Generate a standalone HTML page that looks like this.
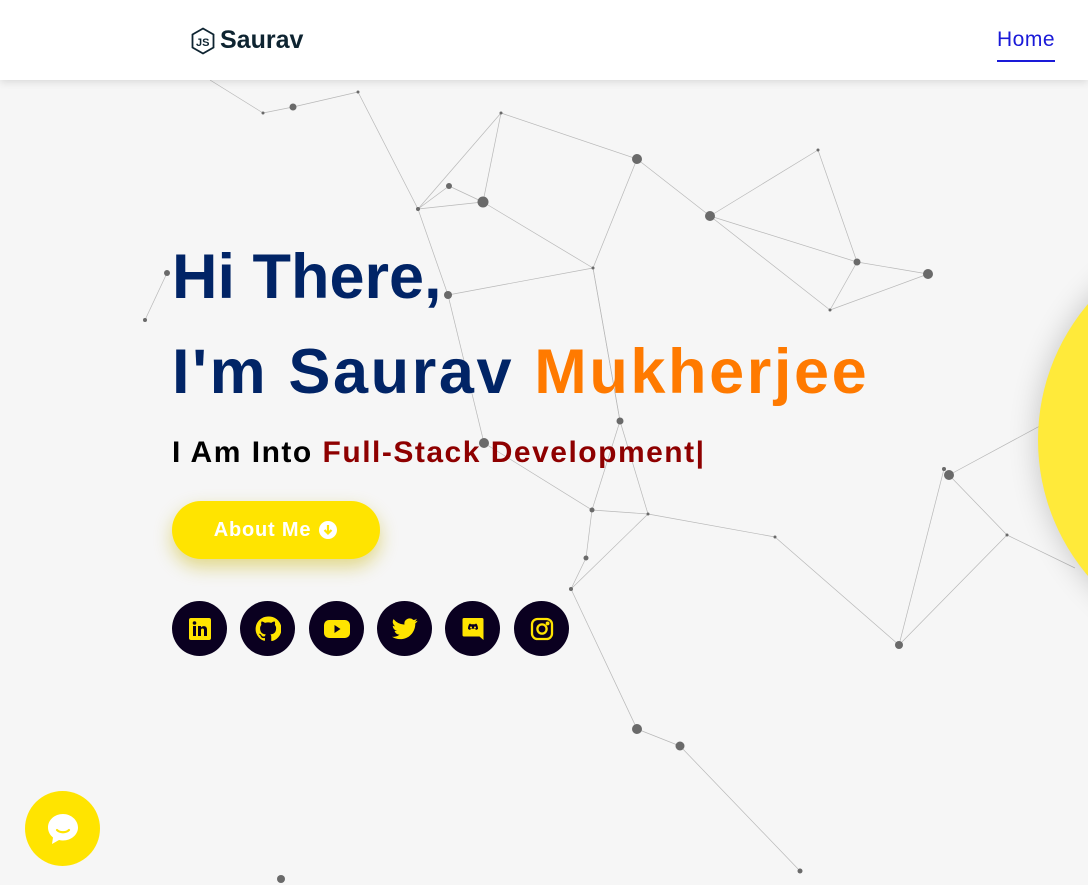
<!DOCTYPE html>
<html><head><meta charset="utf-8"><style>
*{margin:0;padding:0;box-sizing:border-box}
body{width:1088px;height:885px;overflow:hidden;background:#f6f6f6;font-family:"Liberation Sans",sans-serif;position:relative}
header{position:absolute;top:0;left:0;width:1088px;height:80px;background:#fff;box-shadow:0 2px 8px rgba(0,0,0,.12);z-index:5}
.logo{position:absolute;left:190px;top:26px;display:flex;align-items:center;gap:4px;font-weight:bold;font-size:25px;color:#0e2431}
.home{position:absolute;left:997px;top:28px;font-size:21px;color:#1a1ad8;padding-bottom:8px;border-bottom:2px solid #1a1ad8;letter-spacing:0.5px}
svg.net{position:absolute;top:0;left:0}
h1{position:absolute;left:172px;font-size:63px;color:#012466;font-weight:bold;white-space:nowrap}
.sub{position:absolute;left:172px;top:436px;font-size:30px;color:#000;font-weight:bold;white-space:nowrap;letter-spacing:1.5px}
.btn{position:absolute;left:172px;top:501px;width:208px;height:58px;border-radius:30px;background:#ffe400;color:#fff;font-weight:bold;font-size:20px;display:flex;align-items:center;justify-content:center;gap:7px;box-shadow:0 8px 18px rgba(200,180,0,.45);letter-spacing:0.8px}
.soc{position:absolute;top:601px;width:55px;height:55px;border-radius:50%;background:#0a0020;display:flex;align-items:center;justify-content:center}
.big{position:absolute;left:1038px;top:230px;width:420px;height:420px;border-radius:50%;background:#ffea3a;box-shadow:0 0 30px rgba(0,0,0,.2)}
.chat{position:absolute;left:25px;top:791px;width:75px;height:75px;border-radius:50%;background:#ffe400;display:flex;align-items:center;justify-content:center}
</style></head><body>
<svg class="net" width="1088" height="885" stroke="#b8b8b8" stroke-width="0.7" fill="#6a6a6a">
<g>
<line x1="263" y1="113" x2="293" y2="107"/><line x1="293" y1="107" x2="358" y2="92"/><line x1="358" y1="92" x2="418" y2="209"/><line x1="418" y1="209" x2="449" y2="186"/><line x1="449" y1="186" x2="483" y2="202"/><line x1="418" y1="209" x2="483" y2="202"/><line x1="483" y1="202" x2="501" y2="113"/><line x1="418" y1="209" x2="501" y2="113"/><line x1="483" y1="202" x2="593" y2="268"/><line x1="593" y1="268" x2="637" y2="159"/><line x1="637" y1="159" x2="710" y2="216"/><line x1="710" y1="216" x2="818" y2="150"/><line x1="818" y1="150" x2="857" y2="262"/><line x1="857" y1="262" x2="928" y2="274"/><line x1="857" y1="262" x2="830" y2="310"/><line x1="830" y1="310" x2="928" y2="274"/><line x1="710" y1="216" x2="857" y2="262"/><line x1="710" y1="216" x2="830" y2="310"/><line x1="448" y1="295" x2="418" y2="209"/><line x1="448" y1="295" x2="484" y2="443"/><line x1="448" y1="295" x2="593" y2="268"/><line x1="593" y1="268" x2="620" y2="421"/><line x1="620" y1="421" x2="592" y2="510"/><line x1="620" y1="421" x2="648" y2="514"/><line x1="592" y1="510" x2="648" y2="514"/><line x1="592" y1="510" x2="586" y2="558"/><line x1="648" y1="514" x2="571" y2="589"/><line x1="586" y1="558" x2="571" y2="589"/><line x1="648" y1="514" x2="775" y2="537"/><line x1="484" y1="443" x2="592" y2="510"/><line x1="571" y1="589" x2="637" y2="729"/><line x1="637" y1="729" x2="680" y2="746"/><line x1="680" y1="746" x2="800" y2="871"/><line x1="167" y1="273" x2="145" y2="320"/><line x1="949" y1="475" x2="1007" y2="535"/><line x1="1007" y1="535" x2="1075" y2="568"/><line x1="1007" y1="535" x2="899" y2="645"/><line x1="944" y1="469" x2="899" y2="645"/><line x1="775" y1="537" x2="899" y2="645"/><line x1="949" y1="475" x2="1088" y2="400"/><line x1="210" y1="80" x2="263" y2="113"/><line x1="501" y1="113" x2="637" y2="159"/><line x1="620" y1="421" x2="593" y2="268"/>
</g>
<g stroke="none">
<circle cx="263" cy="113" r="1.5"/><circle cx="293" cy="107" r="3.5"/><circle cx="358" cy="92" r="1.5"/><circle cx="418" cy="209" r="2"/><circle cx="449" cy="186" r="3"/><circle cx="483" cy="202" r="5.5"/><circle cx="501" cy="113" r="1.5"/><circle cx="593" cy="268" r="1.5"/><circle cx="637" cy="159" r="5"/><circle cx="710" cy="216" r="5"/><circle cx="818" cy="150" r="1.5"/><circle cx="857" cy="262" r="3.5"/><circle cx="928" cy="274" r="5"/><circle cx="830" cy="310" r="1.5"/><circle cx="448" cy="295" r="4"/><circle cx="484" cy="443" r="5"/><circle cx="620" cy="421" r="3.5"/><circle cx="592" cy="510" r="2.5"/><circle cx="648" cy="514" r="1.5"/><circle cx="586" cy="558" r="2.5"/><circle cx="571" cy="589" r="2"/><circle cx="775" cy="537" r="1.5"/><circle cx="637" cy="729" r="5"/><circle cx="680" cy="746" r="4.5"/><circle cx="800" cy="871" r="2.5"/><circle cx="281" cy="879" r="4"/><circle cx="167" cy="273" r="3"/><circle cx="145" cy="320" r="2"/><circle cx="949" cy="475" r="5"/><circle cx="944" cy="469" r="2"/><circle cx="1007" cy="535" r="1.5"/><circle cx="899" cy="645" r="4"/>
</g></svg>
<div class="big"></div>
<header>
<div class="logo"><svg width="26" height="28" viewBox="0 0 26 28" fill="none" stroke="#0e2431" stroke-width="1.8"><path d="M13 1.5 L23.5 7.5 V20.5 L13 26.5 L2.5 20.5 V7.5 Z"/><text x="6" y="19" font-size="11" fill="#0e2431" stroke="none" font-family="Liberation Sans">JS</text></svg>Saurav</div>
<div class="home">Home</div>
</header>
<h1 style="top:241px">Hi There,</h1>
<h1 style="top:336px;letter-spacing:2.6px">I'm Saurav <span style="color:#ff7a00">Mukherjee</span></h1>
<div class="sub">I Am Into <span style="color:#8e0000">Full-Stack Development|</span></div>
<div class="btn">About Me <svg width="20" height="20" viewBox="0 0 20 20"><circle cx="10" cy="10" r="9" fill="#fff"/><path d="M10 5v8M6.5 10l3.5 3.5 3.5-3.5" stroke="#ffe400" stroke-width="2.2" fill="none"/></svg></div>
<div class="soc" style="left:172px"><svg width="24" height="24" viewBox="0 0 24 24"><rect x="1" y="1" width="22" height="22" rx="2" fill="#ffe400"/><rect x="5" y="9" width="3" height="10" fill="#0a0020"/><circle cx="6.5" cy="6" r="1.8" fill="#0a0020"/><path d="M10 9h3v1.5c1-2 6-2.3 6 2V19h-3v-6c0-2-3-2-3 0v6h-3z" fill="#0a0020"/></svg></div>
<div class="soc" style="left:240px"><svg width="26" height="26" viewBox="0 0 24 24"><path fill="#ffe400" d="M12 .5a11.5 11.5 0 0 0-3.6 22.4c.6.1.8-.3.8-.6v-2c-3.2.7-3.9-1.5-3.9-1.5-.5-1.3-1.3-1.7-1.3-1.7-1-.7.1-.7.1-.7 1.2.1 1.8 1.2 1.8 1.2 1 1.8 2.7 1.3 3.4 1 .1-.8.4-1.3.7-1.6-2.6-.3-5.3-1.3-5.3-5.7 0-1.3.5-2.3 1.2-3.1-.1-.3-.5-1.5.1-3.1 0 0 1-.3 3.2 1.2a11 11 0 0 1 5.8 0c2.2-1.5 3.2-1.2 3.2-1.2.6 1.6.2 2.8.1 3.1.8.8 1.2 1.9 1.2 3.1 0 4.4-2.7 5.4-5.3 5.7.4.4.8 1.1.8 2.2v3.3c0 .3.2.7.8.6A11.5 11.5 0 0 0 12 .5z"/></svg></div>
<div class="soc" style="left:309px"><svg width="28" height="22" viewBox="0 0 28 22"><rect x="1" y="2" width="26" height="18" rx="5" fill="#ffe400"/><path d="M11.5 7v8l6-4z" fill="#0a0020"/></svg></div>
<div class="soc" style="left:377px"><svg width="26" height="22" viewBox="0 0 24 20"><path fill="#ffe400" d="M23.6 2.4c-.9.4-1.8.6-2.8.8 1-.6 1.8-1.5 2.1-2.7-.9.6-2 1-3.1 1.2A4.9 4.9 0 0 0 11.5 6 14 14 0 0 1 1.4.9a4.9 4.9 0 0 0 1.5 6.6c-.8 0-1.600-.3-2.2-.6 0 2.4 1.7 4.4 3.9 4.8-.7.2-1.5.2-2.2.1.6 2 2.4 3.4 4.6 3.4A9.9 9.9 0 0 1 0 17.2 14 14 0 0 0 7.5 19.4c9.1 0 14-7.5 14-14v-.6c1-.7 1.8-1.6 2.1-2.4z"/></svg></div>
<div class="soc" style="left:445px"><svg width="24" height="26" viewBox="0 0 24 26"><path d="M3 2h18a1.5 1.5 0 0 1 1.5 1.5V24l-4-3.5H3A1.5 1.5 0 0 1 1.5 19V3.5A1.5 1.5 0 0 1 3 2z" fill="#ffe400"/><path d="M7 13c0-3 1-5 2-5.5l1 .8h4l1-.8c1 .5 2 2.5 2 5.5l-2 1-1-1.2h-4L9 14z" fill="#0a0020"/><circle cx="10" cy="11.5" r="1" fill="#ffe400"/><circle cx="14" cy="11.5" r="1" fill="#ffe400"/></svg></div>
<div class="soc" style="left:514px"><svg width="24" height="24" viewBox="0 0 24 24" fill="none" stroke="#ffe400" stroke-width="2.3"><rect x="2" y="2" width="20" height="20" rx="5.5"/><circle cx="12" cy="12" r="4.6"/><circle cx="17.6" cy="6.4" r=".8" fill="#ffe400"/></svg></div>
<div class="chat"><svg width="36" height="36" viewBox="0 0 36 36"><path d="M18 3C9.7 3 3 8.9 3 16.5c0 4 2 7.6 5 10L7 33l7-4c1.3.3 2.6.5 4 .5 8.3 0 15-5.9 15-13S26.3 3 18 3z" fill="#fff"/><path d="M12 19c3 3 9 3 12 0" stroke="#ffe400" stroke-width="2.2" fill="none" stroke-linecap="round"/></svg></div>
</body></html>
